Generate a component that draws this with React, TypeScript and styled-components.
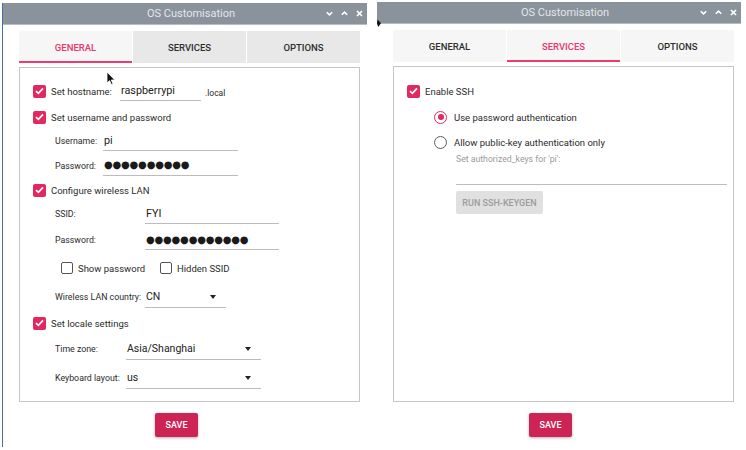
import React from 'react';
import styled, { createGlobalStyle } from 'styled-components';

const PINK = '#e2285e';

const GlobalStyle = createGlobalStyle`
  body {
    margin: 0;
    background: #fff;
    font-family: Roboto, "Liberation Sans", sans-serif;
    color: #2b2b2b;
  }
`;

const Desktop = styled.div`
  position: relative;
  display: flex;
  align-items: flex-start;
  width: 746px;
  height: 450px;
  overflow: hidden;
`;

const Win = styled.div<{ $top: number; $left: number; $edge?: boolean }>`
  margin-top: ${(p) => p.$top}px;
  margin-left: ${(p) => p.$left}px;
  width: 364px;
  height: 444px;
  background: #fff;
  border-left: ${(p) => (p.$edge ? '1px solid #3f70a8' : 'none')};
  display: flex;
  flex-direction: column;
`;

const TitleBar = styled.div`
  height: 21px;
  background: #8a939c;
  border-bottom: 1px solid #b8bdc2;
  display: flex;
  align-items: center;
`;

const Title = styled.div`
  flex: 1;
  padding-left: 56px;
  text-align: center;
  font-size: 11px;
  color: #e3e6e9;
`;

const Controls = styled.div`
  width: 44px;
  box-sizing: border-box;
  padding-left: 3px;
  display: flex;
  align-items: center;
  gap: 8px;

  svg {
    display: block;
  }
`;

const Body = styled.div`
  padding: 6px 7px 0 16px;
  display: flex;
  flex-direction: column;
`;

const Tabs = styled.div`
  display: grid;
  grid-template-columns: repeat(3, 1fr);
  gap: 1px;
  height: 32px;
`;

const Tab = styled.div<{ $active: boolean; $bg: string }>`
  display: flex;
  align-items: center;
  justify-content: center;
  background: ${(p) => p.$bg};
  box-shadow: ${(p) => (p.$active ? `inset 0 -2px 0 #ef3a6e` : 'none')};
  color: ${(p) => (p.$active ? '#ec356a' : '#2e2e2e')};
  font-size: 9.5px;
  font-weight: 500;
`;

const Box = styled.div<{ $h: number; $pt: number }>`
  margin-top: 4px;
  height: ${(p) => p.$h}px;
  box-sizing: border-box;
  border: 1px solid #c6c6c6;
  padding: ${(p) => p.$pt}px 0 0 13px;
  display: flex;
  flex-direction: column;
`;

const Row = styled.div<{ $h: number; $indent?: number }>`
  height: ${(p) => p.$h}px;
  padding-left: ${(p) => p.$indent ?? 0}px;
  display: flex;
  align-items: center;
  flex-shrink: 0;
`;

const CheckBox = styled.span<{ $on: boolean }>`
  width: ${(p) => (p.$on ? 13 : 12)}px;
  height: ${(p) => (p.$on ? 13 : 12)}px;
  box-sizing: border-box;
  border-radius: 2px;
  background: ${(p) => (p.$on ? PINK : '#fff')};
  border: ${(p) => (p.$on ? 'none' : '1.5px solid #555')};
  display: inline-flex;
  align-items: center;
  justify-content: center;
  flex-shrink: 0;
`;

const RadioDot = styled.span<{ $on: boolean }>`
  width: 13px;
  height: 13px;
  box-sizing: border-box;
  border-radius: 50%;
  border: 1.5px solid ${(p) => (p.$on ? PINK : '#5c5c5c')};
  display: inline-flex;
  align-items: center;
  justify-content: center;
  flex-shrink: 0;

  &::after {
    content: '';
    display: ${(p) => (p.$on ? 'block' : 'none')};
    width: 6px;
    height: 6px;
    border-radius: 50%;
    background: ${PINK};
  }
`;

const Text = styled.span<{ $w?: number; $gap?: number }>`
  font-size: 9.5px;
  margin-left: ${(p) => p.$gap ?? 5}px;
  width: ${(p) => (p.$w ? `${p.$w}px` : 'auto')};
  white-space: nowrap;
  flex-shrink: 0;
`;

const SubLabel = styled.span<{ $w: number }>`
  width: ${(p) => p.$w}px;
  font-size: 8.8px;
  flex-shrink: 0;
  white-space: nowrap;
`;

const Field = styled.div<{ $w: number; $h?: number; $size?: number }>`
  width: ${(p) => p.$w}px;
  height: ${(p) => p.$h ?? 20}px;
  box-sizing: border-box;
  border-bottom: 1px solid #bcbcbc;
  display: flex;
  align-items: center;
  justify-content: space-between;
  padding: 0 10px 0 1px;
  font-size: ${(p) => p.$size ?? 10.8}px;
  color: #222;
  flex-shrink: 0;
`;

const Dots = styled.span`
  font-family: "DejaVu Sans", sans-serif;
  font-size: 10px;
  letter-spacing: -0.2px;
  color: #1a1a1a;
  line-height: 1;
`;

const Arrow = styled.span`
  width: 0;
  height: 0;
  border-left: 3.5px solid transparent;
  border-right: 3.5px solid transparent;
  border-top: 4px solid #222;
`;

const Suffix = styled.span`
  font-size: 8.5px;
  margin-left: 4px;
  padding-top: 3px;
`;

const Hint = styled.div`
  height: 10px;
  padding-left: 49px;
  display: flex;
  align-items: center;
  font-size: 8.7px;
  color: #9a9a9a;
`;

const KeyArea = styled.div`
  margin-left: 49px;
  width: 271px;
  height: 20px;
  border-bottom: 1px solid #bdbdbd;
`;

const GreyButton = styled.div`
  margin: 6px 0 0 49px;
  width: 87px;
  height: 23px;
  background: #e0e0e0;
  border-radius: 2px;
  display: flex;
  align-items: center;
  justify-content: center;
  font-size: 9px;
  font-weight: 500;
  color: #9c9c9c;
`;

const Footer = styled.div`
  padding: 11px 0 0 136px;
`;

const SaveButton = styled.div`
  width: 43px;
  height: 24px;
  border-radius: 2px;
  background: #cd2355;
  box-shadow: 0 1px 3px rgba(0, 0, 0, 0.3);
  display: flex;
  align-items: center;
  justify-content: center;
  color: #fff;
  font-size: 9px;
  font-weight: 500;
`;

const Cursor = styled.svg<{ $x: number; $y: number }>`
  position: absolute;
  left: ${(p) => p.$x}px;
  top: ${(p) => p.$y}px;
`;

function Tick() {
  return (
    <svg width='9' height='8' viewBox='0 0 9 8'>
      <polyline points='1,4.2 3.4,6.4 8,1.4' fill='none' stroke='#fff' strokeWidth='1.7' />
    </svg>
  );
}

function Check({ on, label, w }: { on: boolean; label: string; w?: number }) {
  return (
    <>
      <CheckBox $on={on}>{on && <Tick />}</CheckBox>
      <Text $w={w}>{label}</Text>
    </>
  );
}

function WindowControls() {
  return (
    <Controls>
      <svg width='7' height='7' viewBox='0 0 7 7'>
        <polyline points='0.8,2.2 3.5,4.9 6.2,2.2' fill='none' stroke='#fff' strokeWidth='1.6' />
      </svg>
      <svg width='7' height='7' viewBox='0 0 7 7'>
        <polyline points='0.8,4.8 3.5,2.1 6.2,4.8' fill='none' stroke='#fff' strokeWidth='1.6' />
      </svg>
      <svg width='7' height='7' viewBox='0 0 7 7'>
        <path d='M1 1 L6 6 M6 1 L1 6' fill='none' stroke='#fff' strokeWidth='1.7' />
      </svg>
    </Controls>
  );
}

function TabBar({ active, dim }: { active: number; dim: boolean }) {
  const names = ['GENERAL', 'SERVICES', 'OPTIONS'];
  return (
    <Tabs>
      {names.map((n, i) => (
        <Tab key={n} $active={i === active} $bg={dim && i !== active ? '#e8e8e8' : '#f6f6f6'}>
          {n}
        </Tab>
      ))}
    </Tabs>
  );
}

function Frame({ top, left, edge, children }: { top: number; left: number; edge?: boolean; children: React.ReactNode }) {
  return (
    <Win $top={top} $left={left} $edge={edge}>
      <TitleBar>
        <Title>OS Customisation</Title>
        <WindowControls />
      </TitleBar>
      <Body>
        {children}
        <Footer>
          <SaveButton>SAVE</SaveButton>
        </Footer>
      </Body>
    </Win>
  );
}

function GeneralTab() {
  return (
    <Frame top={3} left={2} edge>
      <TabBar active={0} dim />
      <Box $h={335} $pt={10}>
        <Row $h={26}>
          <Check on label='Set hostname:' w={69} />
          <Field $w={81}>raspberrypi</Field>
          <Suffix>.local</Suffix>
        </Row>
        <Row $h={26}>
          <Check on label='Set username and password' />
        </Row>
        <Row $h={22} $indent={22}>
          <SubLabel $w={48}>Username:</SubLabel>
          <Field $w={135}>pi</Field>
        </Row>
        <Row $h={27} $indent={22}>
          <SubLabel $w={48}>Password:</SubLabel>
          <Field $w={135}>
            <Dots>●●●●●●●●●●</Dots>
          </Field>
        </Row>
        <Row $h={22}>
          <Check on label='Configure wireless LAN' />
        </Row>
        <Row $h={26} $indent={22}>
          <SubLabel $w={90}>SSID:</SubLabel>
          <Field $w={134}>FYI</Field>
        </Row>
        <Row $h={26} $indent={22}>
          <SubLabel $w={90}>Password:</SubLabel>
          <Field $w={134}>
            <Dots>●●●●●●●●●●●●</Dots>
          </Field>
        </Row>
        <Row $h={30} $indent={28}>
          <Check on={false} label='Show password' w={82} />
          <Check on={false} label='Hidden SSID' />
        </Row>
        <Row $h={28} $indent={22}>
          <SubLabel $w={90}>Wireless LAN country:</SubLabel>
          <Field $w={81} $h={22} $size={10.5}>
            CN
            <Arrow />
          </Field>
        </Row>
        <Row $h={24}>
          <Check on label='Set locale settings' />
        </Row>
        <Row $h={28} $indent={22}>
          <SubLabel $w={71}>Time zone:</SubLabel>
          <Field $w={135} $h={22} $size={10.5}>
            Asia/Shanghai
            <Arrow />
          </Field>
        </Row>
        <Row $h={30} $indent={22}>
          <SubLabel $w={71}>Keyboard layout:</SubLabel>
          <Field $w={135} $h={22} $size={10.5}>
            us
            <Arrow />
          </Field>
        </Row>
      </Box>
    </Frame>
  );
}

function ServicesTab() {
  return (
    <Frame top={2} left={10}>
      <TabBar active={1} dim={false} />
      <Box $h={336} $pt={11}>
        <Row $h={26}>
          <Check on label='Enable SSH' />
        </Row>
        <Row $h={26} $indent={27}>
          <RadioDot $on />
          <Text $gap={7}>Use password authentication</Text>
        </Row>
        <Row $h={24} $indent={27}>
          <RadioDot $on={false} />
          <Text $gap={7}>Allow public-key authentication only</Text>
        </Row>
        <Hint>Set authorized_keys for 'pi':</Hint>
        <KeyArea />
        <GreyButton>RUN SSH-KEYGEN</GreyButton>
      </Box>
    </Frame>
  );
}

export default function App() {
  return (
    <>
      <GlobalStyle />
      <Desktop>
        <GeneralTab />
        <ServicesTab />
        <Cursor $x={106} $y={71} width='10' height='15' viewBox='0 0 10 15'>
          <path d='M1 1 L1 12 L3.6 9.6 L5.4 13.6 L7 12.9 L5.3 9 L8.8 9 Z' fill='#111' stroke='#fff' strokeWidth='0.8' />
        </Cursor>
        <Cursor $x={376} $y={19} width='7' height='9' viewBox='0 0 7 9'>
          <path d='M1.5 0.5 L5 4.2 L2.2 8 L1 4.5 Z' fill='#111' />
        </Cursor>
      </Desktop>
    </>
  );
}
